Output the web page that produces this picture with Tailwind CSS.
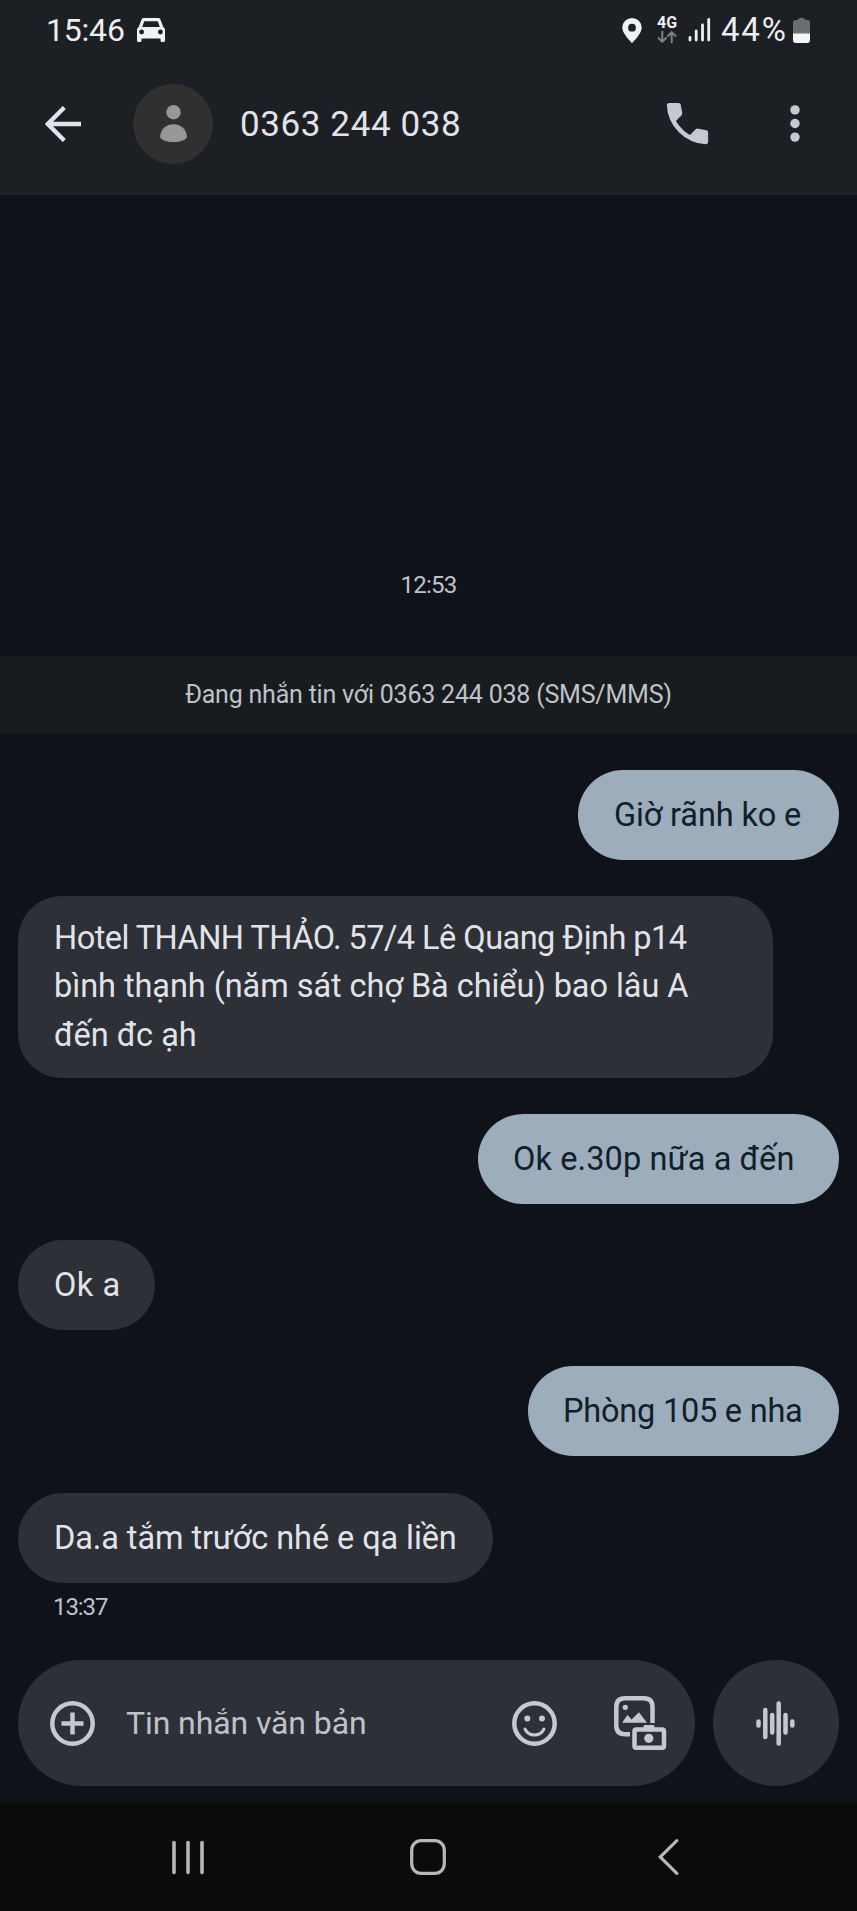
<!DOCTYPE html>
<html lang="vi">
<head>
<meta charset="utf-8">
<title>0363 244 038</title>
<script src="https://cdn.jsdelivr.net/npm/@tailwindcss/browser@4"></script>
</head>
<body class="bg-[#0f1219]">
<div class="w-[857px] h-[1911px] flex flex-col overflow-hidden bg-[#0f1219] font-[Roboto,sans-serif]">

  <header class="h-[195px] shrink-0 bg-[#1c1f24]">
    <!-- Status bar -->
    <div class="h-[60px] flex items-center pl-[46px] pr-[47px] text-[32px] text-[#eceef0]">
      <span class="tracking-[-0.2px]">15:46</span>
      <svg class="ml-[12px] mb-px w-[28px] h-[24px]" viewBox="0 0 28 24" fill="#f1f2f3">
        <path fill-rule="evenodd" d="M6.500 0h15q1.400 0 1.900 1.400L26.300 9q1.700.8 1.700 3v10.500q0 1.500-1.500 1.500h-1.500q-1.500 0-1.500-1.500V20.500H4.500v2q0 1.500-1.500 1.500H1.500Q0 24 0 22.500V12q0-2.200 1.700-3L4.600 1.400Q5.100 0 6.500 0Zm.7 3.200L5.200 9h17.600l-2-5.800ZM4.600 11.600a2.400 2.400 0 1 0 0 4.800 2.400 2.400 0 0 0 0-4.800Zm18.800 0a2.400 2.400 0 1 0 0 4.800 2.400 2.400 0 0 0 0-4.800Z"/>
      </svg>
      <svg class="ml-auto w-[20px] h-[25px]" viewBox="0 0 20 25" fill="#f1f2f3">
        <path fill-rule="evenodd" d="M10 0a9.700 9.700 0 0 1 9.700 9.700C19.700 16 10 25 10 25S.3 16 .3 9.700A9.700 9.700 0 0 1 10 0Zm0 5.800a3.900 3.900 0 1 0 0 7.800 3.900 3.900 0 0 0 0-7.800Z"/>
      </svg>
      <div class="ml-[14px] w-[22px] h-[28px] flex flex-col items-center">
        <span class="text-[16px] leading-[14px] font-bold">4G</span>
        <svg class="mt-px w-[20px] h-[12px] shrink-0" viewBox="0 0 20 12" fill="none" stroke="#7c7f83" stroke-width="2">
          <path d="M5.300 0v10.500M1 6.500l4.300 4.300 4.300-4.300M14.700 12V1.500M10.400 5.500l4.300-4.300L19 5.500"/>
        </svg>
      </div>
      <svg class="ml-[10px] w-[23px] h-[24px]" viewBox="0 0 23 24" stroke="#eceef0" stroke-width="2.800" stroke-linecap="round">
        <path d="M2 19.500V22"/><path d="M8.200 13V22"/><path d="M14.500 7V22"/><path d="M20.700 1.500V22"/>
      </svg>
      <span class="ml-[10px] text-[33px] w-[67px] tracking-[1.8px]">44%</span>
      <svg class="ml-[5px] w-[17px] h-[25px]" viewBox="0 0 17 25">
        <path fill="#6b6d70" d="M5 2q0-2 2-2h3q2 0 2 2h2.500q2.500 0 2.500 2.500V16H0V4.500Q0 2 2.500 2Z"/>
        <path fill="#f3f4f5" d="M0 15.500h17v6.500q0 3-3 3H3q-3 0-3-3Z"/>
      </svg>
    </div>
    <!-- Conversation bar -->
    <div class="h-[127px] flex items-center pl-[45px] pr-[57px]">
      <svg class="w-[36px] h-[36px]" viewBox="0 0 36 36" fill="none" stroke="#e0e3e8" stroke-width="4.300">
        <path d="M36 18H3M19.300 1.400 2.800 18l16.500 16.600"/>
      </svg>
      <div class="ml-[52px] size-[80px] rounded-full bg-[#303030] flex items-center justify-center">
        <svg class="w-[27px] h-[37px]" viewBox="0 0 27 37" fill="#989898">
          <circle cx="13.500" cy="7.200" r="7.200"/>
          <path d="M0 31.500C1 24 6 19.200 13.500 19.200S26 24 27 31.500C27 35 20 37 13.500 37S0 35 0 31.500Z"/>
        </svg>
      </div>
      <h1 class="ml-[27px] pt-[2px] text-[35px] leading-[48px] tracking-[0.6px] text-[#e1e3e8] whitespace-nowrap">0363 244 038</h1>
      <svg class="ml-auto w-[55px] h-[55px]" viewBox="0 0 24 24" fill="#c6c9d1">
        <path d="M19.950 21q-3.125 0-6.175-1.362T8.225 15.775 4.363 10.225 3 4.050q0-.45.3-.75t.75-.3H8.100q.35 0 .625.238t.325.562l.65 3.500q.05.4-.025.675T9.400 8.450L6.975 10.900q.5.925 1.188 1.787t1.512 1.663q.775.775 1.625 1.438T13.100 17l2.350-2.350q.225-.225.588-.337t.712-.063l3.450.7q.35.1.575.363T21 15.900v4.050q0 .45-.3.75t-.75.3Z"/>
      </svg>
      <svg class="ml-[75px] w-[10px] h-[37px] overflow-visible" viewBox="0 0 10 37" fill="#c6c9d1">
        <circle cx="5" cy="4.900" r="4.700"/><circle cx="5" cy="18.500" r="4.700"/><circle cx="5" cy="32.100" r="4.700"/>
      </svg>
    </div>
  </header>

  <!-- Messages -->
  <main class="h-[1465px] shrink-0 flex flex-col text-[32.5px] leading-[48.3px] text-[#e1e3e9]">
    <time class="mt-[374px] h-[32px] leading-[32px] text-center text-[24px] tracking-[-0.75px] text-[#bfc2c8]">12:53</time>
    <p class="mt-[55px] h-[77px] pt-[2px] bg-[#181c1e] flex items-center justify-center text-[25px] tracking-[-0.21px] text-[#bfc2c8] whitespace-nowrap">Đang nhắn tin với 0363 244 038 (SMS/MMS)</p>
    <div class="mt-[37px] mr-[18px] self-end w-[261px] h-[90px] rounded-[45px] bg-[#9dadbb] text-[#10202b] flex items-center pl-[36px] tracking-[-0.14px] whitespace-nowrap">Giờ rãnh ko e</div>
    <div class="mt-[36px] ml-[18px] w-[755px] h-[182px] rounded-[44px] bg-[#2d3036] pt-[18px] pl-[36px] whitespace-nowrap">
      <p class="tracking-[-0.53px]">Hotel THANH THẢO. 57/4 Lê Quang Định p14</p>
      <p class="tracking-[-0.06px]">bình thạnh (năm sát chợ Bà chiểu) bao lâu A</p>
      <p>đến đc ạh</p>
    </div>
    <div class="mt-[36px] mr-[18px] self-end w-[361px] h-[90px] rounded-[45px] bg-[#9dadbb] text-[#10202b] flex items-center pl-[35px] tracking-[0.1px] whitespace-nowrap">Ok e.30p nữa a đến</div>
    <div class="mt-[36px] ml-[18px] w-[137px] h-[90px] rounded-[45px] bg-[#2d3036] flex items-center pl-[36px] tracking-[0.5px] whitespace-nowrap">Ok a</div>
    <div class="mt-[36px] mr-[18px] self-end w-[311px] h-[90px] rounded-[45px] bg-[#9dadbb] text-[#10202b] flex items-center pl-[35px] tracking-[-0.22px] whitespace-nowrap">Phòng 105 e nha</div>
    <div class="mt-[37px] ml-[18px] w-[475px] h-[90px] rounded-[45px] bg-[#2d3036] flex items-center pl-[36px] tracking-[-0.09px] whitespace-nowrap">Da.a tắm trước nhé e qa liền</div>
    <time class="mt-[8px] ml-[53px] h-[32px] leading-[32px] text-[24px] tracking-[-1.1px] text-[#bfc2c8]">13:37</time>
  </main>

  <!-- Composer -->
  <div class="h-[144px] shrink-0 flex items-start gap-[18px] pl-[18px]">
    <div class="w-[677px] h-[126px] rounded-full bg-[#2d3037] flex items-center pl-[32px] pr-[28px]">
      <svg class="w-[45px] h-[45px]" viewBox="0 0 45 45" fill="none" stroke="#c5c7d1" stroke-width="4.500">
        <circle cx="22.500" cy="22.500" r="20.200"/><path d="M22.500 11.500v22M11.500 22.500h22"/>
      </svg>
      <span class="ml-[31px] text-[32px] tracking-[-0.1px] text-[#bfc2cb] whitespace-nowrap">Tin nhắn văn bản</span>
      <svg class="ml-auto w-[45px] h-[45px]" viewBox="0 0 45 45" fill="none" stroke="#c5c7d1" stroke-width="4.500">
        <circle cx="22.500" cy="22.500" r="20.200"/>
        <path d="M13 28q3 6 9.500 6t9.500-6" stroke-width="3" stroke-linecap="round"/>
        <g fill="#c5c7d1" stroke="none"><circle cx="15.300" cy="17.500" r="3"/><circle cx="30" cy="17.500" r="3"/></g>
      </svg>
      <svg class="ml-[57px] w-[53px] h-[54px]" viewBox="0 0 53 54" fill="none" stroke="#c5c7d1" stroke-width="4.500">
        <path d="M38.500 27V11q0-8.700-8.700-8.700H11q-8.700 0-8.700 8.700v18.500q0 8.700 8.700 8.700h5"/>
        <rect x="20.500" y="33.500" width="29.500" height="18.200" rx="1.800"/>
        <g fill="#c5c7d1" stroke="none">
          <circle cx="11.300" cy="11.300" r="2.600"/>
          <path d="M8 26.800 13.500 19l4 4.500L25 16.200l8 10.600Z"/>
          <path d="M29.500 33v-2.500q0-1.500 1.500-1.500h8q1.500 0 1.500 1.500V33Z"/>
          <circle cx="34.800" cy="42.300" r="4.600"/>
        </g>
      </svg>
    </div>
    <div class="size-[126px] rounded-full bg-[#2d3037] flex items-center justify-center">
      <svg class="w-[39px] h-[45px] mr-[2px]" viewBox="0 0 39 45" fill="none" stroke="#c5c7d1" stroke-width="4.500" stroke-linecap="round">
        <path d="M2.500 20.500v4M9.300 9v27M16.200 14v17.500M22.700 2.500v40M29.500 14v17.500M36.300 20.500v4"/>
      </svg>
    </div>
  </div>

  <!-- System navigation -->
  <nav class="h-[107px] shrink-0 bg-[#0b0b0b] flex items-start pt-[35px] pl-[171px]">
    <svg class="w-[34px] h-[35px] mt-px" viewBox="0 0 34 35" stroke="#b5b5b5" stroke-width="3.600" stroke-linecap="round">
      <path d="M3 2.500v30"/><path d="M17 2.500v30"/><path d="M31 2.500v30"/>
    </svg>
    <svg class="ml-[205px] w-[36px] h-[36px]" viewBox="0 0 36 36" fill="none" stroke="#b8b8b8" stroke-width="3.200">
      <rect x="1.700" y="1.700" width="32.600" height="32.600" rx="9.500"/>
    </svg>
    <svg class="ml-[212px] w-[21px] h-[36px]" viewBox="0 0 21 36" fill="none" stroke="#b8b8b8" stroke-width="3.200" stroke-linecap="round">
      <path d="M18.800 1.700 2.200 18l16.600 16.300"/>
    </svg>
  </nav>
</div>
</body>
</html>
